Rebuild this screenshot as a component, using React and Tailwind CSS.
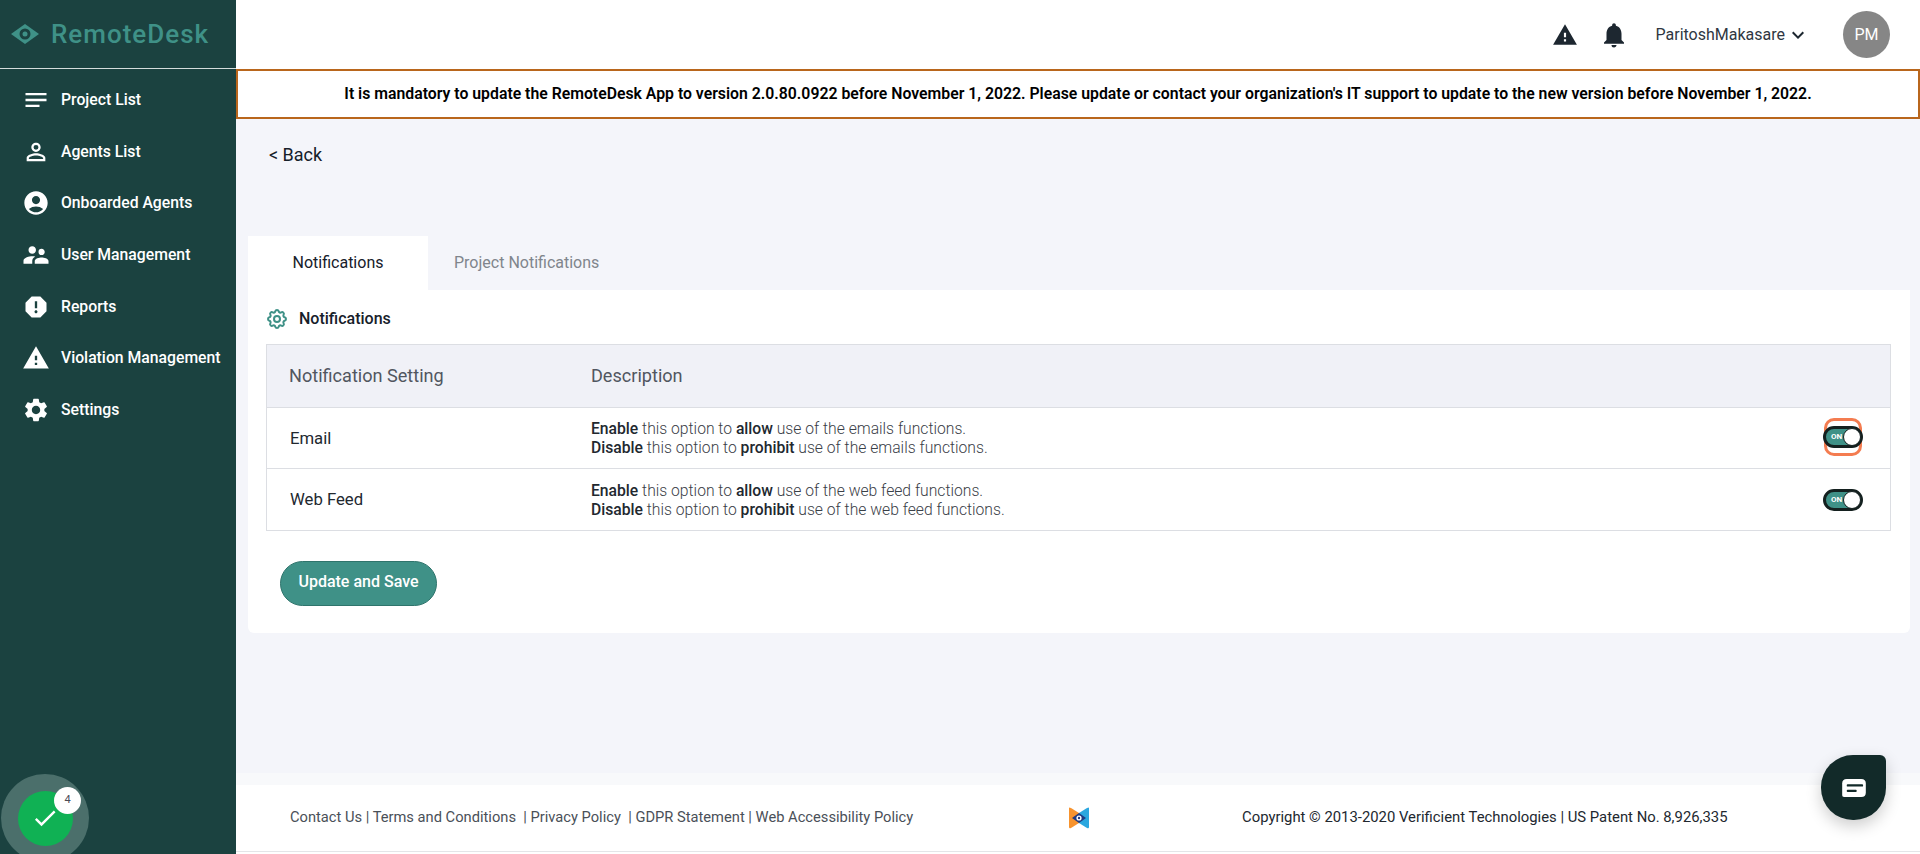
import {
  MdNotes,
  MdPersonOutline,
  MdAccountCircle,
  MdSupervisorAccount,
  MdReport,
  MdWarning,
  MdSettings,
  MdNotifications,
  MdKeyboardArrowDown,
  MdCheck,
} from "react-icons/md";
import { HiOutlineCog } from "react-icons/hi";

const navItems = [
  { label: "Project List", icon: MdNotes, size: 28 },
  { label: "Agents List", icon: MdPersonOutline, size: 28 },
  { label: "Onboarded Agents", icon: MdAccountCircle, size: 28 },
  { label: "User Management", icon: MdSupervisorAccount, size: 30 },
  { label: "Reports", icon: MdReport, size: 28 },
  { label: "Violation Management", icon: MdWarning, size: 28 },
  { label: "Settings", icon: MdSettings, size: 28 },
];

const rows = [
  { name: "Email", what: "emails", focus: true },
  { name: "Web Feed", what: "web feed", focus: false },
];

function Toggle({ focus }) {
  return (
    <div className={`flex items-center justify-center w-[38px] h-[38px] rounded-[10px] border-[3px] ${focus ? "border-[#f47c50] mb-[2px]" : "border-transparent"}`}>
      <div className="relative shrink-0 w-[40px] h-[22px] rounded-full bg-[#3f9187] border-[3px] border-[#14201f]">
        <span className="absolute left-[5px] top-[3px] text-[8px] leading-[10px] font-bold text-white">ON</span>
        <span className="absolute right-[-1px] top-[-1px] w-[18px] h-[18px] rounded-full bg-white border border-[#14201f]" />
      </div>
    </div>
  );
}

function LogoEye() {
  return (
    <svg width="30" height="22" viewBox="0 0 30 22">
      <path d="M15 1 L29 11 L15 21 L1 11 Z" fill="#3f9187" />
      <circle cx="15" cy="11" r="5.5" fill="#1b4240" />
      <circle cx="15" cy="11" r="2.5" fill="#3f9187" />
    </svg>
  );
}

function FooterLogo() {
  return (
    <svg width="22" height="22" viewBox="0 0 22 22">
      <path d="M1 1 Q1 0 3 1 L11 6 L11 16 L3 21 Q1 22 1 20 Z" fill="#f7932e" />
      <path d="M21 1 Q21 0 19 1 L11 6 L11 16 L19 21 Q21 22 21 20 Z" fill="#2ba7df" />
      <path d="M11 6 L18 11 L11 16 L4 11 Z" fill="#1f3a82" />
      <circle cx="11" cy="11" r="2.6" fill="#fff" />
      <circle cx="11" cy="11" r="1.2" fill="#1f3a82" />
    </svg>
  );
}

export default function App() {
  return (
    <div className="relative flex h-[854px] w-[1920px] overflow-hidden bg-white font-['Roboto',sans-serif]">
      {/* sidebar */}
      <aside className="w-[236px] shrink-0 bg-[#1b4240]">
        <div className="flex items-center h-[68px] pl-[10px] gap-[11px] border-b border-[#d5dcdb] box-content">
          <LogoEye />
          <span className="text-[26px] font-medium tracking-[1px] text-[#3f9187]">RemoteDesk</span>
        </div>
        <nav className="pt-[5px]">
          {navItems.map((item) => {
            const Icon = item.icon;
            return (
              <div key={item.label} className="flex items-center h-[51.7px] pl-[22px]">
                <span className="flex items-center justify-center w-[28px]">
                  <Icon size={item.size} className="shrink-0 text-white" />
                </span>
                <span className="ml-[11px] text-[15.75px] font-medium text-white">{item.label}</span>
              </div>
            );
          })}
        </nav>
      </aside>

      <div className="flex flex-col flex-1 min-w-0">
        {/* top bar */}
        <header className="flex items-center justify-end h-[69px] shrink-0 pr-[30px]">
          <MdWarning size={26} className="text-[#1d2730]" />
          <MdNotifications size={30} className="ml-[21px] text-[#1d2730]" />
          <span className="ml-[27px] text-[16px] text-[#2f3742]">ParitoshMakasare</span>
          <MdKeyboardArrowDown size={24} className="ml-[1px] text-[#1d2730]" />
          <div className="ml-[33px] flex items-center justify-center w-[47px] h-[47px] rounded-full bg-[#868686] text-[16px] text-white">PM</div>
        </header>

        <div className="flex items-center justify-center h-[50px] shrink-0 border-2 border-[#b9661c] text-[15.8px] font-semibold text-black">
          It is mandatory to update the RemoteDesk App to version 2.0.80.0922 before November 1, 2022. Please update or contact your organization's IT support to update to the new version before November 1, 2022.
        </div>

        {/* content */}
        <main className="flex-1 bg-[#f4f5fa] pl-[12px] pr-[10px]">
          <div className="h-[117px] pt-[23px] pl-[21px] text-[18px] leading-[26px] text-[#16202a]">&lt; Back</div>
          <div className="flex h-[54px]">
            <div className="flex items-center justify-center w-[180px] bg-white text-[16px] text-[#16202a]">Notifications</div>
            <div className="flex items-center pl-[26px] text-[16px] text-[#80858c]">Project Notifications</div>
          </div>
          <section className="h-[343px] bg-white rounded-b-[6px] pl-[18px] pr-[19px]">
            <div className="flex items-center h-[54px] gap-[10px] pt-[4px]">
              <HiOutlineCog size={24} className="-ml-[1px] text-[#3f9187]" />
              <span className="text-[16px] font-medium text-[#16202a]">Notifications</span>
            </div>
            <div className="border border-[#dcdee3]">
              <div className="flex items-center h-[63px] pb-[1px] bg-[#f0f1f7] border-b border-[#dcdee3] text-[18.1px] text-[#51565f]">
                <span className="w-[324px] pl-[22px]">Notification Setting</span>
                <span>Description</span>
              </div>
              {rows.map((row, i) => (
                <div key={row.name} className={`flex items-center h-[61px] ${i === 0 ? "border-b border-[#dcdee3]" : ""}`}>
                  <span className={`w-[324px] pl-[23px] text-[16.7px] text-[#22282f] ${i === 0 ? "pt-[1px]" : ""}`}>{row.name}</span>
                  <div className="flex-1 text-[15.7px] leading-[19px] font-light text-[#3a4047]">
                    <p><b className="font-medium text-[#22282f]">Enable</b> this option to <b className="font-medium text-[#22282f]">allow</b> use of the {row.what} functions.</p>
                    <p><b className="font-medium text-[#22282f]">Disable</b> this option to <b className="font-medium text-[#22282f]">prohibit</b> use of the {row.what} functions.</p>
                  </div>
                  <div className="pr-[28px]"><Toggle focus={row.focus} /></div>
                </div>
              ))}
            </div>
            <button className="mt-[30px] ml-[14px] w-[157px] h-[45px] pb-[3px] rounded-full bg-[#3f9187] border border-[#2f746c] text-[16px] font-medium text-white">Update and Save</button>
          </section>
        </main>

        {/* footer */}
        <div className="h-[12px] shrink-0 bg-[#f8f9fb]" />
        <footer className="flex items-center h-[67px] pb-[1px] shrink-0 border-b border-[#e4e5e8] mb-[2px] text-[14.7px]">
          <div className="w-[832px] pl-[54px] text-[#4a5058]">Contact Us | Terms and Conditions &nbsp;| Privacy Policy &nbsp;| GDPR Statement | Web Accessibility Policy</div>
          <FooterLogo />
          <div className="ml-[152px] text-[14.85px] text-[#22282f]">Copyright © 2013-2020 Verificient Technologies | US Patent No. 8,926,335</div>
        </footer>
      </div>

      {/* floating check widget */}
      <div className="absolute left-[1px] top-[774px] flex items-center justify-center w-[88px] h-[88px] rounded-full bg-[#4b6f6b]">
        <div className="flex items-center justify-center w-[55px] h-[55px] rounded-full bg-[#10b154]">
          <MdCheck size={28} className="text-white" />
        </div>
        <div className="absolute left-[53px] top-[13px] flex items-center justify-center w-[27px] h-[27px] rounded-full bg-white text-[11px] text-[#4a4a55]">4</div>
      </div>

      {/* chat widget */}
      <div className="absolute left-[1821px] top-[755px] flex items-center justify-center w-[65px] h-[65px] rounded-[32px_6px_32px_32px] bg-[#122a29] shadow-[0_6px_16px_rgba(0,0,0,0.2)]">
        <svg width="26" height="20" viewBox="0 0 28 22">
          <path d="M6 1 H22 Q27 1 27 6 V16 Q27 21 22 21 H3 Q1 21 1 19 V6 Q1 1 6 1 Z" fill="#fff" />
          <rect x="6" y="7" width="18" height="2.4" rx="1" fill="#122a29" />
          <rect x="6" y="13" width="11" height="2.4" rx="1" fill="#122a29" />
        </svg>
      </div>
    </div>
  );
}
